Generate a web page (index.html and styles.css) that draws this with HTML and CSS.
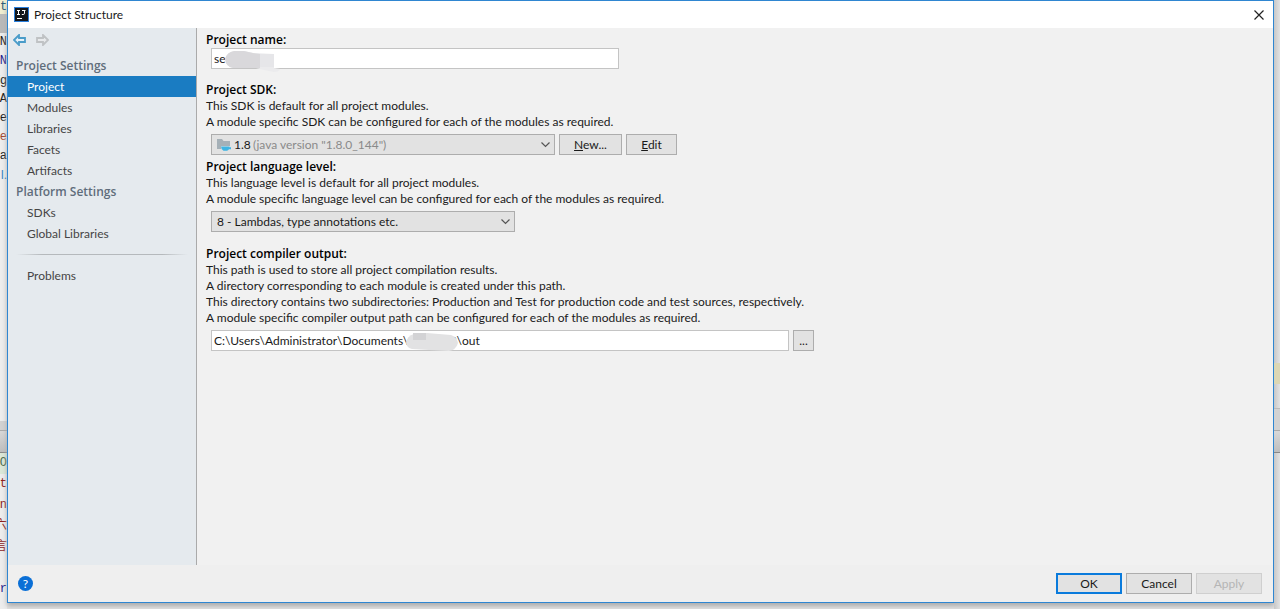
FILE: index.html
```html
<!DOCTYPE html>
<html lang="en">
<head>
<meta charset="UTF-8">
<meta name="viewport" content="width=device-width, initial-scale=1.0">
<title>Project Structure</title>
<link rel="stylesheet" href="styles.css">
</head>
<body>
<div class="desktop">
    <!-- editor showing behind the dialog -->
    <div class="editor editor-left">
        <div class="tab">t</div>
        <div class="bar"></div>
        <div class="code">
            <div>N</div>
            <div class="navy">N</div>
            <div class="narrow">ig</div>
            <div>A</div>
            <div>e</div>
            <div class="rust">e</div>
            <div>a</div>
            <div class="narrow blue">l.</div>
        </div>
        <div class="split"></div>
        <div class="toolbar"></div>
        <div class="console">
            <div class="green">O</div>
            <div>t</div>
            <div>n</div>
            <div>六</div>
            <div>言</div>
            <div></div>
            <div class="navy">r</div>
        </div>
    </div>

    <div class="dialog">
        <div class="titlebar">
            <svg class="logo" width="15" height="15" viewBox="0 0 15 15">
                <rect width="15" height="15" fill="#2a7fdc"/>
                <rect x="1" y="1" width="13" height="13" fill="#11161c"/>
                <path d="M3 3.5h3M4.5 3.5v4M3 7.5h3M8 3.5h3.500M10.500 3.500v2.800q0 1.200-1.300 1.200h-1.400M3 11.500h5" fill="none" stroke="#fff"/>
            </svg>
            <span class="title">Project Structure</span>
            <button class="close" type="button" aria-label="Close">
                <svg width="10" height="10" viewBox="0 0 10 10"><path d="M.5.5l9 9M9.500.5l-9 9" stroke="#222" stroke-width="1.200"/></svg>
            </button>
        </div>

        <div class="main">
            <div class="sidebar">
                <div class="history">
                    <button type="button" aria-label="Back">
                        <svg width="13" height="12" viewBox="0 0 13 12"><path d="M1 6L6 1v3h6v4H6v3z" fill="#e6f2f9" stroke="#4a9cc9" stroke-width="1.800"/></svg>
                    </button>
                    <button type="button" aria-label="Forward" disabled>
                        <svg width="13" height="12" viewBox="0 0 13 12"><path d="M12 6L7 1v3H1v4h6v3z" fill="#e8eaec" stroke="#bfc2c4" stroke-width="1.800"/></svg>
                    </button>
                </div>
                <nav>
                    <div class="group">Project Settings</div>
                    <a class="item active" href="#">Project</a>
                    <a class="item" href="#">Modules</a>
                    <a class="item" href="#">Libraries</a>
                    <a class="item" href="#">Facets</a>
                    <a class="item" href="#">Artifacts</a>
                    <div class="group">Platform Settings</div>
                    <a class="item" href="#">SDKs</a>
                    <a class="item" href="#">Global Libraries</a>
                    <div class="line"></div>
                    <a class="item" href="#">Problems</a>
                </nav>
            </div>

            <form class="content" id="settings">
                <div class="section name-section">
                    <label class="heading" for="name">Project name:</label>
                    <div class="row">
                        <div class="field name-field">
                            <input type="text" id="name" value="se">
                            <svg class="smudge name-smudge" width="56" height="22" viewBox="0 0 56 22">
                                <path d="M0 9Q2 2 9 1l10 0 9 2 21 1v14l6 1q-1 3-6 3l-10-2-8-2-23 0Q1 17 0 9z" fill="#ebebed"/>
                                <path d="M0 9Q2 2 9 1l10 0 9 2 7 1v14H8Q1 17 0 9z" fill="#d9d8db"/>
                                <path d="M35 4h14v13H35z" fill="#e6e6e9"/>
                            </svg>
                        </div>
                    </div>
                </div>

                <div class="section sdk-section">
                    <label class="heading" for="sdk">Project SDK:</label>
                    <p>This SDK is default for all project modules.<br>
                    A module specific SDK can be configured for each of the modules as required.</p>
                    <div class="row">
                        <div class="field sdk-field">
                            <select id="sdk">
                                <option>(java version "1.8.0_144")</option>
                            </select>
                            <span class="sdk-name">
                                <svg width="15" height="14" viewBox="0 0 15 14">
                                    <path d="M0 1h5l1.500 2H13v5H4v3H0z" fill="#a5b0b7"/>
                                    <path d="M4 8.500h8.500v.7h1.500v2h-2q-1 1.300-2 1.500H6.500Q4 11.500 4 8.500z" fill="#3fb4e2"/>
                                </svg>
                                1.8
                            </span>
                            <svg class="arrow" width="9" height="6" viewBox="0 0 9 6"><path d="M.5.5l4 4 4-4" fill="none" stroke="#555" stroke-width="1.200"/></svg>
                        </div>
                        <button class="btn new" type="button"><u>N</u>ew...</button>
                        <button class="btn edit" type="button"><u>E</u>dit</button>
                    </div>
                </div>

                <div class="section">
                    <label class="heading" for="level">Project language level:</label>
                    <p>This language level is default for all project modules.<br>
                    A module specific language level can be configured for each of the modules as required.</p>
                    <div class="row">
                        <div class="field level-field">
                            <select id="level">
                                <option>8 - Lambdas, type annotations etc.</option>
                            </select>
                            <svg class="arrow" width="9" height="6" viewBox="0 0 9 6"><path d="M.5.5l4 4 4-4" fill="none" stroke="#555" stroke-width="1.200"/></svg>
                        </div>
                    </div>
                </div>

                <div class="section">
                    <label class="heading" for="output">Project compiler output:</label>
                    <p>This path is used to store all project compilation results.<br>
                    A directory corresponding to each module is created under this path.<br>
                    This directory contains two subdirectories: Production and Test for production code and test sources, respectively.<br>
                    A module specific compiler output path can be configured for each of the modules as required.</p>
                    <div class="row">
                        <div class="field output-field">
                            <input type="text" id="output" value="C:\Users\Administrator\Documents\&nbsp;&nbsp;&nbsp;&nbsp;&nbsp;&nbsp;&nbsp;&nbsp;&nbsp;&nbsp;&nbsp;&nbsp;&nbsp;&nbsp;?\out">
                            <svg class="smudge output-smudge" width="53" height="20" viewBox="0 0 53 20">
                                <path d="M0 11Q1 4 8 2l13-1 12 1 12 1q6 2 7 8-2 7-9 8l-20-1-17-1Q1 16 0 11z" fill="#e2e2e3"/>
                                <path d="M7 1h13v7H7z" fill="#d3d3d5"/>
                            </svg>
                        </div>
                        <button class="btn browse" type="button" aria-label="Browse">...</button>
                    </div>
                </div>
            </form>
        </div>

        <div class="footer">
            <button class="help" type="button">?</button>
            <div class="actions">
                <button class="btn ok" type="submit" form="settings">OK</button>
                <button class="btn" type="button">Cancel</button>
                <button class="btn" type="button" disabled>Apply</button>
            </div>
        </div>
    </div>

    <div class="editor editor-right">
        <div class="code"></div>
        <div class="mark"></div>
        <div class="gap"></div>
        <div class="split"></div>
        <div class="toolbar"></div>
        <div class="console"></div>
    </div>
</div>
</body>
</html>
```
FILE: styles.css
```css
*{
box-sizing: border-box;
}

body{
margin: 0;
font-family: Lato, "Noto Sans", sans-serif;
font-size: 12px;
line-height: 16px;
color: #1a1a1a;
}

button, input, select{
font: inherit;
color: inherit;
margin: 0;
}

.desktop{
display: flex;
min-height: 100vh;
background: #e3e3e3;
}

/* editor behind */
.editor{
display: flex;
flex-direction: column;
flex: none;
overflow: hidden;
background: #ededed;
font-family: "Liberation Mono", "Noto Sans CJK SC", monospace;
}

.editor-left{
width: 7px;
}

.editor-right{
width: 6px;
background: linear-gradient(to right, #c8c8c8, #e2e2e2);
}

.editor .code div, .editor .console div{
display: flex;
justify-content: flex-end;
height: 19px;
line-height: 19px;
}

.tab{
height: 14px;
line-height: 14px;
background: #f1eed0;
color: #245a7a;
}

.bar{
height: 19px;
background: #b9b9b9;
}

.editor-left .code{
height: 388px;
}

.editor .narrow{
font-family: "Liberation Sans", sans-serif;
}

.editor .navy{
color: #1c1c8c;
}

.editor .rust{
color: #a0452c;
}

.editor .blue{
color: #2f7fc4;
}

.split{
height: 9px;
background: #d2d2d2;
}

.editor-right .split{
height: 22px;
border-top: 1px solid #bbb;
}

.toolbar{
height: 23px;
border-top: 1px solid #aaa;
border-bottom: 1px solid #888;
background: linear-gradient(#d8d8d8, #bebebe);
}

.editor .console{
flex: 1;
color: #8b1a1a;
}

.editor .console div{
height: 21px;
line-height: 21px;
}

.editor .console .green{
background: #dbe8d8;
color: #4c6b4c;
}

.editor-right .code{
height: 363px;
}

.mark{
height: 21px;
background: #dcd7b4;
}

.gap{
height: 24px;
}

/* dialog */
.dialog{
display: flex;
flex-direction: column;
flex: 1;
margin-bottom: 6px;
border: 1px solid #2f86d1;
background: #f1f1f1;
box-shadow: 0 3px 5px #aaa;
}

.titlebar{
display: flex;
align-items: center;
height: 27px;
padding: 0 9px 0 6px;
background: #fff;
}

.title{
flex: 1;
padding-left: 5px;
}

.close, .history button{
display: flex;
padding: 0;
border: none;
background: none;
}

.main{
display: flex;
flex: 1;
}

.sidebar{
width: 189px;
flex: none;
border-right: 1px solid #aaa;
background: #e5eaee;
}

.history{
display: flex;
align-items: center;
gap: 10px;
height: 27px;
padding: 0 5px 3px;
}

.group, .item{
display: block;
height: 21px;
line-height: 21px;
}

.group, .heading{
font-family: "Open Sans", sans-serif;
font-weight: 600;
}

.group{
padding-left: 8px;
color: #5f6d7b;
}

.item{
padding-left: 19px;
color: #454545;
text-decoration: none;
}

.item.active{
background: #1a7cc2;
color: #fff;
}

.line{
height: 1px;
margin: 10px 8px;
background: linear-gradient(to right, transparent, #b5b9bc 15%, #b5b9bc 85%, transparent);
}

.content{
flex: 1;
padding: 4px 9px;
}

.section{
padding-bottom: 14px;
}

.name-section{
padding-bottom: 13px;
}

.sdk-section{
padding-bottom: 4px;
}

.heading{
display: block;
color: #000;
}

.content p{
margin: 0 0 4px;
}

.row{
display: flex;
gap: 4px;
padding-left: 5px;
}

.field{
position: relative;
height: 21px;
}

.field input, .field select{
display: block;
width: 100%;
height: 21px;
border: 1px solid #c4c4c4;
border-radius: 0;
outline: none;
}

.field input{
padding: 0 2px;
background: #fff;
}

.field select{
appearance: none;
padding: 0 20px 0 5px;
border-color: #adadad;
background: #e2e2e2;
}

.field #sdk{
padding-left: 41px;
color: #8a8a8a;
}

.name-field{
width: 408px;
}

.sdk-field{
width: 344px;
}

.level-field{
width: 304px;
}

.output-field{
width: 578px;
}

.sdk-name{
position: absolute;
top: 0;
left: 6px;
display: flex;
align-items: center;
gap: 2px;
height: 21px;
pointer-events: none;
}

.arrow{
position: absolute;
top: 8px;
right: 5px;
pointer-events: none;
}

.smudge{
position: absolute;
pointer-events: none;
}

.name-smudge{
top: 2px;
left: 14px;
}

.output-smudge{
top: 2px;
left: 195px;
}

.btn{
width: 66px;
height: 21px;
padding: 0;
border: 1px solid #adadad;
background: #e2e2e2;
line-height: 19px;
}

.btn:disabled{
border-color: #cfcfcf;
background: #e2e2e2;
color: #b5b5b5;
}

.btn.new{
width: 63px;
}

.btn.edit{
width: 51px;
}

.btn.browse{
width: 21px;
}

.btn.ok{
border: 2px solid #0a7bdc;
line-height: 17px;
}

.footer{
display: flex;
align-items: center;
justify-content: space-between;
height: 37px;
padding: 0 11px 0 10px;
background: #efefef;
}

.help{
width: 15px;
height: 15px;
padding: 0;
border: none;
border-radius: 50%;
background: #0a6fd6;
color: #fff;
line-height: 15px;
}

.actions{
display: flex;
gap: 4px;
}
```
